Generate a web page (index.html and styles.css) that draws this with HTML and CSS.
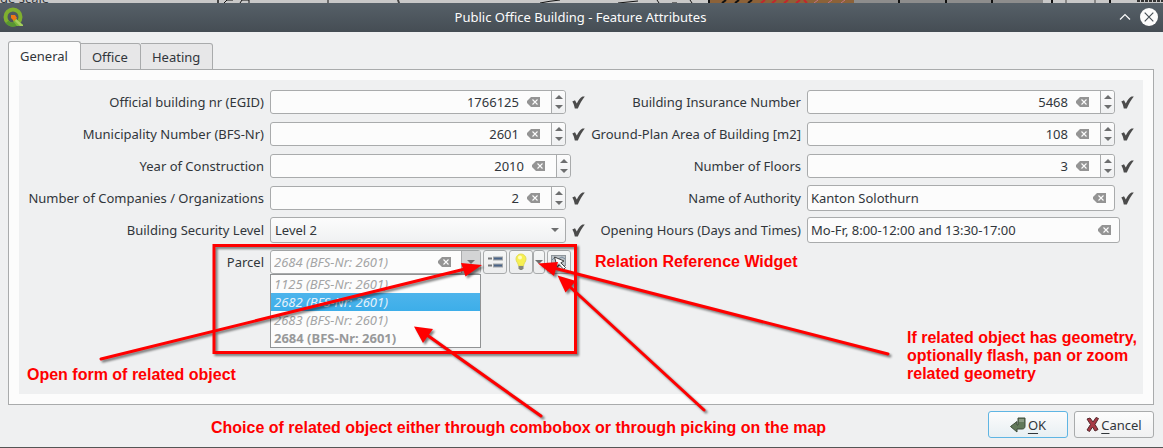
FILE: index.html
```html
<!DOCTYPE html>
<html lang="en">
<head>
<meta charset="utf-8">
<title>Public Office Building - Feature Attributes</title>
<link rel="stylesheet" href="styles.css">
</head>
<body>
<svg class="symbols" aria-hidden="true">
  <symbol id="clear" viewBox="0 0 13 10"><path d="M4 0h9v10H4L0 6V4z" fill="#949494"/><path d="M5.500 2.500l5 5m0-5l-5 5" stroke="#fcfcfc" stroke-width="1.100" fill="none"/></symbol>
  <symbol id="check" viewBox="0 0 13 13"><path d="M0.300 5.500L3 4.300L4.800 7.400C6.500 4.200 8.500 1.600 10.500 0.600L12.800 0.600C10 4.200 7.800 8 5.800 12.500L2.800 12.500C2.300 9.500 1.500 7.400 0.300 5.500z" fill="#4b4b4b"/></symbol>
  <symbol id="up" viewBox="0 0 8 4"><path d="M4 0l4 4H0z" fill="#6d6e6f"/></symbol>
  <symbol id="down" viewBox="0 0 8 4"><path d="M4 4l4-4H0z" fill="#6d6e6f"/></symbol>
</svg>

<div class="backdrop">
  <span class="backdrop-text">ge scale</span>
  <svg class="backdrop-map" width="946" height="3" viewBox="217 0 946 3" aria-hidden="true">
    <path d="M217 0h2v3h-2zM397 0h2l1 3h-2z" fill="#444"/>
    <path d="M224 3l3-3h6M240 3l2-3h7v3M328 0v3M540 3q10-2 20-3M618 3l20-2M657 0l2 3M672 3h5M690 0l2 3" fill="none" stroke="#111"/>
    <path d="M708 0h146v3H708z" fill="#8c6239"/>
    <path d="M709 0v3M722 3l4-3M735 3l4-3M748 3l4-3" stroke="#111" stroke-width="2"/>
    <path d="M761 3l4-3M772 3l4-3M784 3l4-3M796 3l4-3M804 0l3 3" stroke="#c1272d" stroke-width="2"/>
    <path d="M814 3l4-3M828 3l4-3M841 3l4-3" stroke="#c27584"/>
    <path d="M854 0h189v3H854z" fill="#8d8d8d"/>
    <path d="M899 0v3M946 0v3M992 0v3M1052 0v3M1110 0v3" stroke="#111" stroke-width="2"/>
    <path d="M1066 0v3M1095 0v3" stroke="#444"/>
    <path d="M1137 1h26" stroke="#333" stroke-width="2" stroke-dasharray="3 1"/>
  </svg>
</div>

<main class="dialog">
  <header class="titlebar">
    <svg class="logo" width="20" height="20" viewBox="0 0 20 20" aria-hidden="true">
      <circle cx="10" cy="10" r="7.500" fill="none" stroke="#7fb02f" stroke-width="4"/>
      <path d="M4 15a7.500 7.500 0 0 0 9 2" fill="none" stroke="#589632" stroke-width="4"/>
      <path d="M11 10l9 8v1h-6l-4-5z" fill="#7cb83a"/>
      <path d="M13 12l7 6v1h-3l-5-5z" fill="#a5cf60"/>
      <path d="M8 8h4l2 3-3 3-3-3z" fill="#ee7913"/>
    </svg>
    <h1 class="title">Public Office Building - Feature Attributes</h1>
    <div class="window-buttons">
      <button class="window-button" aria-label="Shade"><svg width="12" height="8" viewBox="0 0 12 8"><path d="M1 6.500l5-5 5 5" fill="none" stroke="#fcfcfc" stroke-width="1.200"/></svg></button>
      <button class="window-button close" aria-label="Close"><svg width="10" height="10" viewBox="0 0 10 10"><path d="M0.700 0.700l8.600 8.600m0-8.600l-8.600 8.600" stroke="#475057" stroke-width="1.200"/></svg></button>
    </div>
  </header>

  <div class="content">
    <div class="tabs" role="tablist">
      <button class="tab active" role="tab" aria-selected="true">General</button>
      <button class="tab" role="tab" aria-selected="false">Office</button>
      <button class="tab" role="tab" aria-selected="false">Heating</button>
    </div>
    <section class="pane" role="tabpanel">
      <form class="form">
        <label for="egid">Official building nr (EGID)</label>
        <div class="cell"><div class="field spin"><input id="egid" value="1766125"><button type="button" class="clear" aria-label="Clear"><svg><use href="#clear"/></svg></button><span class="steps"><button type="button" aria-label="Increase"><svg><use href="#up"/></svg></button><button type="button" aria-label="Decrease"><svg><use href="#down"/></svg></button></span></div><svg class="check"><use href="#check"/></svg></div>
        <label for="insurance">Building Insurance Number</label>
        <div class="cell"><div class="field spin"><input id="insurance" value="5468"><button type="button" class="clear" aria-label="Clear"><svg><use href="#clear"/></svg></button><span class="steps"><button type="button" aria-label="Increase"><svg><use href="#up"/></svg></button><button type="button" aria-label="Decrease"><svg><use href="#down"/></svg></button></span></div><svg class="check"><use href="#check"/></svg></div>

        <label for="bfs">Municipality Number (BFS-Nr)</label>
        <div class="cell"><div class="field spin"><input id="bfs" value="2601"><button type="button" class="clear" aria-label="Clear"><svg><use href="#clear"/></svg></button><span class="steps"><button type="button" aria-label="Increase"><svg><use href="#up"/></svg></button><button type="button" aria-label="Decrease"><svg><use href="#down"/></svg></button></span></div><svg class="check"><use href="#check"/></svg></div>
        <label for="area">Ground-Plan Area of Building [m2]</label>
        <div class="cell"><div class="field spin"><input id="area" value="108"><button type="button" class="clear" aria-label="Clear"><svg><use href="#clear"/></svg></button><span class="steps"><button type="button" aria-label="Increase"><svg><use href="#up"/></svg></button><button type="button" aria-label="Decrease"><svg><use href="#down"/></svg></button></span></div><svg class="check"><use href="#check"/></svg></div>

        <label for="year">Year of Construction</label>
        <div class="cell unchecked"><div class="field spin"><input id="year" value="2010"><button type="button" class="clear" aria-label="Clear"><svg><use href="#clear"/></svg></button><span class="steps"><button type="button" aria-label="Increase"><svg><use href="#up"/></svg></button><button type="button" aria-label="Decrease"><svg><use href="#down"/></svg></button></span></div></div>
        <label for="floors">Number of Floors</label>
        <div class="cell"><div class="field spin"><input id="floors" value="3"><button type="button" class="clear" aria-label="Clear"><svg><use href="#clear"/></svg></button><span class="steps"><button type="button" aria-label="Increase"><svg><use href="#up"/></svg></button><button type="button" aria-label="Decrease"><svg><use href="#down"/></svg></button></span></div><svg class="check"><use href="#check"/></svg></div>

        <label for="companies">Number of Companies / Organizations</label>
        <div class="cell"><div class="field spin"><input id="companies" value="2"><button type="button" class="clear" aria-label="Clear"><svg><use href="#clear"/></svg></button><span class="steps"><button type="button" aria-label="Increase"><svg><use href="#up"/></svg></button><button type="button" aria-label="Decrease"><svg><use href="#down"/></svg></button></span></div><svg class="check"><use href="#check"/></svg></div>
        <label for="authority">Name of Authority</label>
        <div class="cell"><div class="field line"><input id="authority" value="Kanton Solothurn"><button type="button" class="clear" aria-label="Clear"><svg><use href="#clear"/></svg></button></div><svg class="check"><use href="#check"/></svg></div>

        <label for="security">Building Security Level</label>
        <div class="cell"><div class="field line select"><select id="security"><option>Level 2</option></select><svg class="caret"><use href="#down"/></svg></div><svg class="check"><use href="#check"/></svg></div>
        <label for="hours">Opening Hours (Days and Times)</label>
        <div class="cell unchecked"><div class="field line"><input id="hours" value="Mo-Fr, 8:00-12:00 and 13:30-17:00"><button type="button" class="clear" aria-label="Clear"><svg><use href="#clear"/></svg></button></div></div>

        <label for="parcel">Parcel</label>
        <div class="cell relation">
          <div class="combo">
            <div class="field"><input id="parcel" class="reference" value="2684 (BFS-Nr: 2601)"><button type="button" class="clear" aria-label="Clear"><svg><use href="#clear"/></svg></button><button type="button" class="open" aria-label="Show parcels"><svg class="caret"><use href="#down"/></svg></button></div>
            <ul class="menu" role="listbox" aria-label="Parcels">
              <li role="option">1125 (BFS-Nr: 2601)</li>
              <li role="option" class="highlighted">2682 (BFS-Nr: 2601)</li>
              <li role="option">2683 (BFS-Nr: 2601)</li>
              <li role="option" class="current">2684 (BFS-Nr: 2601)</li>
            </ul>
          </div>
          <button type="button" class="tool" aria-label="Open form">
            <svg width="16" height="12" viewBox="0 0 16 12"><path d="M1 2.500h4M1 9.500h4" stroke="#77797b" stroke-width="2"/><rect x="6.500" y="1" width="9" height="3" fill="#4a6488" stroke="#a2a5a7"/><rect x="6.500" y="8" width="9" height="3" fill="#4a6488" stroke="#a2a5a7"/></svg>
          </button>
          <div class="split">
            <button type="button" class="tool" aria-label="Highlight feature">
              <svg width="14" height="18" viewBox="0 0 14 18"><path d="M7 1a5 5 0 0 1 5 5c0 3-2.500 4-2.500 7h-5C4.500 10 2 9 2 6a5 5 0 0 1 5-5z" fill="#f7f052" stroke="#e3dd58"/><circle cx="6" cy="4.500" r="2" fill="#fffcc0"/><path d="M4.500 13h5v2.500L8 17H6l-1.500-1.500z" fill="#85877c"/></svg>
            </button>
            <button type="button" class="tool narrow" aria-label="Highlight options"><svg class="caret"><use href="#down"/></svg></button>
          </div>
          <button type="button" class="tool" aria-label="Pick on map">
            <svg width="16" height="16" viewBox="0 0 16 16"><rect x="0.500" y="1.500" width="14" height="10" fill="#bcc2c6" stroke="#8e959a"/><path d="M1 6l3-3 3 2 4-2 3 2" fill="none" stroke="#75899c"/><path d="M3.500 3l9.500 4-3.200 1.800 4.700 4.700-1.800 1.800L8 10.600 6.300 13.500z" fill="#fff" stroke="#333" stroke-width="0.900"/></svg>
          </button>
        </div>
      </form>
    </section>
  </div>

  <footer class="actions">
    <button class="action default"><svg width="16" height="16" viewBox="0 0 16 16"><path d="M8 1h7v8c0 2-1 3-3 3H7v3L0.500 9.500 7 4.500V8h1z" fill="#62795a" stroke="#3f4d3a"/><path d="M9 2h5v3H9z" fill="#8c9c85"/></svg><span><u>O</u>K</span></button>
    <button class="action"><svg width="13" height="15" viewBox="0 0 13 15"><path d="M1 2l3-1 3 4 3-4.500 2.500 1L9 7.500l3 5-3 1.500-2.500-4L3.500 14.500 1 13l3.500-5.500z" fill="#a83a46" stroke="#55272c"/></svg><span><u>C</u>ancel</span></button>
  </footer>
</main>

<div class="annotations">
  <svg width="1163" height="448" viewBox="0 0 1163 448" aria-hidden="true">
    <g class="marks">
      <rect x="214" y="245.500" width="361.500" height="107"/>
      <path d="M101 359L465 269M541 416L427 335M888 354L554 268M704 410L569 286"/>
      <path class="head" d="M482 265l-21-2 4.500 13.500zM414 326.500l19 2.500-10 14zM538 263.500l20-1.500-4 14zM557.500 275.500l18.500 5.500-10.500 11.500z"/>
    </g>
  </svg>
  <p class="note note-widget">Relation Reference Widget</p>
  <p class="note note-form">Open form of related object</p>
  <p class="note note-geometry">If related object has geometry,<br>optionally flash, pan or zoom<br>related geometry</p>
  <p class="note note-choice">Choice of related object either through combobox or through picking on the map</p>
</div>
</body>
</html>
```
FILE: styles.css
```css
* {
  box-sizing: border-box;
}

body {
  position: relative;
  margin: 0;
  min-height: 100vh;
  display: flex;
  flex-direction: column;
  overflow: hidden;
  background: #555;
  color: #31363b;
  font: 13px/18px "Noto Sans", sans-serif;
}

button,
input,
select {
  margin: 0;
  padding: 0;
  border: 0;
  background: none;
  color: inherit;
  font: inherit;
}

button {
  display: flex;
  align-items: center;
  justify-content: center;
}

.symbols {
  position: absolute;
  width: 0;
  height: 0;
}

.backdrop {
  display: flex;
  align-items: flex-end;
  justify-content: space-between;
  height: 3px;
  overflow: hidden;
  background: #c8c8c8;
}

.backdrop-text {
  margin-bottom: -4px;
}

.backdrop-map {
  flex: none;
}

.dialog {
  flex: 1;
  display: flex;
  flex-direction: column;
  margin-bottom: 1px;
  background: #eff0f1;
}

.titlebar {
  display: grid;
  grid-template-columns: 1fr auto 1fr;
  align-items: center;
  height: 29px;
  padding: 0 5px 2px 3px;
  background: linear-gradient(#566068, #454d54);
  color: #fcfcfc;
}

.title {
  margin: 0;
  font-size: 13px;
  font-weight: 400;
}

.window-buttons {
  display: flex;
  justify-content: flex-end;
  gap: 6px;
}

.window-button {
  width: 18px;
  height: 18px;
  border-radius: 50%;
}

.window-button.close {
  background: #fcfcfc;
}

.content {
  flex: 1;
  display: flex;
  flex-direction: column;
  padding: 9px 9px 0 8px;
}

.tabs {
  z-index: 1;
  display: flex;
  align-items: flex-end;
}

.tab {
  height: 27px;
  margin-bottom: -1px;
  padding: 0 12px 0 11px;
  border: 1px solid #a9abac;
  border-left: 0;
  border-radius: 0 3px 0 0;
  background: #e7e7e8;
}

.tab.active {
  height: 29px;
  border-left: 1px solid #a9abac;
  border-bottom: 0;
  border-radius: 3px 3px 0 0;
  background: #fcfcfc;
}

.pane {
  flex: 1;
  display: flex;
  padding: 10px;
  border: 1px solid #a9abac;
  background: #fcfcfc;
}

.form {
  flex: 1;
  display: grid;
  grid-template-columns: 236px 315fr 210px 327fr;
  grid-auto-rows: 26px;
  align-content: start;
  align-items: center;
  gap: 6px;
  padding: 9px;
  background: #eff0f1;
}

.form label {
  text-align: right;
  white-space: nowrap;
}

.cell {
  display: flex;
  align-items: center;
  gap: 6px;
  min-width: 0;
}

.cell.unchecked {
  padding-right: 14px;
}

.check {
  flex: none;
  width: 13px;
  height: 13px;
}

.field {
  flex: 1;
  display: flex;
  align-items: center;
  min-width: 0;
  height: 24px;
  border: 1px solid #a9abac;
  border-radius: 3px;
  background: #fcfcfc;
}

.field.line {
  height: 26px;
}

.field input {
  flex: 1;
  min-width: 0;
  height: 100%;
  padding-left: 3px;
  outline: 0;
}

.spin input {
  padding-right: 8px;
  text-align: right;
}

.clear svg {
  display: block;
  width: 13px;
  height: 10px;
}

.line .clear {
  margin-right: 8px;
}

.spin .clear {
  margin-right: 11px;
}

.steps {
  display: flex;
  flex-direction: column;
  justify-content: center;
  gap: 6px;
  width: 14px;
  height: 100%;
  border-left: 1px solid #a9abac;
  border-radius: 0 3px 3px 0;
  background: linear-gradient(#fcfcfc, #eff0f1);
}

.steps svg {
  display: block;
  width: 8px;
  height: 4px;
}

.caret {
  display: block;
  width: 8px;
  height: 4px;
}

.select {
  padding-right: 6px;
  background: linear-gradient(#fcfcfc, #f0f1f2);
}

.select select {
  flex: 1;
  height: 100%;
  padding-left: 4px;
  appearance: none;
}

.relation {
  gap: 2px;
}

.combo {
  position: relative;
  display: flex;
  width: 211px;
}

.field .reference {
  color: #a3a4a5;
  font-style: italic;
}

.combo .clear {
  margin-right: 10px;
}

.open {
  width: 19px;
  height: 100%;
  border-left: 1px solid #a9abac;
  background: #d3d4d5;
}

.menu {
  position: absolute;
  top: 100%;
  left: 0;
  right: 0;
  margin: 0;
  padding: 0;
  border: 1px solid #919394;
  background: #fcfcfc;
  color: #a3a4a5;
  font-style: italic;
  list-style: none;
}

.menu li {
  padding-left: 3px;
}

.menu .highlighted {
  background: linear-gradient(#4db4ec, #3daee9);
  color: #e4f1fa;
}

.menu .current {
  color: #98999a;
  font-style: normal;
  font-weight: 700;
}

.tool {
  flex: none;
  width: 24px;
  height: 24px;
  border: 1px solid #a9abac;
  border-radius: 3px;
  background: linear-gradient(#f5f6f6, #ecedee);
}

.tool.narrow {
  width: 12px;
}

.split {
  display: flex;
}

.actions {
  display: flex;
  justify-content: flex-end;
  gap: 6px;
  padding: 6px 9px 9px;
}

.action {
  width: 80px;
  height: 27px;
  gap: 2px;
  border: 1px solid #a9abac;
  border-radius: 3px;
  background: linear-gradient(#fcfcfc, #f0f1f2);
}

.action.default {
  border-color: #5fb5e3;
  background: linear-gradient(#fcfcfc, #e8eff3);
}

.action u {
  text-underline-offset: 3px;
}

.annotations {
  position: absolute;
  top: 0;
  left: 0;
  z-index: 2;
  pointer-events: none;
}

.annotations svg {
  display: block;
}

.marks {
  fill: none;
  stroke: #f00;
  stroke-width: 3;
  stroke-linecap: round;
  filter: drop-shadow(2px 2px 1px rgba(0, 0, 0, 0.5));
}

.marks .head {
  fill: #f00;
  stroke: none;
}

.note {
  position: absolute;
  margin: 0;
  color: #f00;
  font: bold 16px/18px "Liberation Sans", Arial, sans-serif;
  white-space: nowrap;
}

.note-widget {
  top: 253px;
  left: 595px;
}

.note-form {
  top: 366px;
  left: 27px;
}

.note-geometry {
  top: 329px;
  left: 907px;
}

.note-choice {
  top: 419px;
  left: 211px;
}
```
